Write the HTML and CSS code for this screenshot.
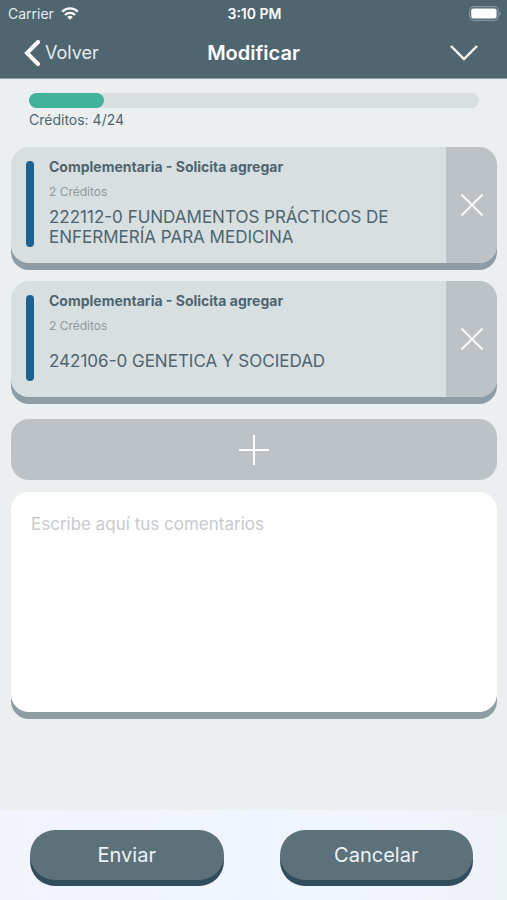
FILE: index.html
```html
<!DOCTYPE html>
<html lang="es">
<head>
  <meta charset="UTF-8">
  <meta name="viewport" content="width=device-width, initial-scale=1.0">
  <title>Modificar</title>
  <link rel="stylesheet" href="styles.css">
</head>
<body>
  <header class="header">
    <div class="status-bar">
      <div class="carrier">
        <span>Carrier</span>
        <svg width="18" height="13" viewBox="0 0 18 13" fill="none" stroke="#fff" stroke-width="2.4">
          <path d="M1.2 4.6a11 11 0 0 1 15.6 0M4 8a7 7 0 0 1 10 0"/>
          <path d="M6.2 10.1a4 4 0 0 1 5.6 0L9 12.8z" fill="#fff" stroke="none"/>
        </svg>
      </div>
      <span class="time">3:10 PM</span>
      <svg class="battery" width="32" height="15" viewBox="0 0 32 15">
        <rect x="0.7" y="0.7" width="28.6" height="13.6" rx="4" fill="none" stroke="#84949d" stroke-width="1.2"/>
        <rect x="2.2" y="2.4" width="25.4" height="10" rx="2.2" fill="#fff"/>
        <path d="M30.4 5.2v4.6c1.8-.8 1.8-3.8 0-4.6z" fill="#84949d"/>
      </svg>
    </div>
    <nav class="nav-bar">
      <button class="back" type="button">
        <svg width="16" height="26" viewBox="0 0 16 26" fill="none" stroke="#fff" stroke-width="4" stroke-linecap="round">
          <path d="M14 2L3 13l11 11"/>
        </svg>
        <span>Volver</span>
      </button>
      <h1>Modificar</h1>
      <button class="toggle" type="button" aria-label="Desplegar">
        <svg width="28" height="16" viewBox="0 0 28 16" fill="none" stroke="#fff" stroke-width="2.4">
          <path d="M1 1l13 13L27 1"/>
        </svg>
      </button>
    </nav>
  </header>

  <main class="content">
    <div class="credits">
      <div class="progress">
        <div class="progress-fill" style="width: 16.67%"></div>
      </div>
      <p>Créditos: 4/24</p>
    </div>

    <div class="courses">
      <article class="card">
        <div class="card-bar"></div>
        <div class="card-info">
          <h2>Complementaria - Solicita agregar</h2>
          <p class="card-credits">2 Créditos</p>
          <p class="card-name">222112-0 FUNDAMENTOS PRÁCTICOS DE ENFERMERÍA PARA MEDICINA</p>
        </div>
        <button class="card-remove" type="button" aria-label="Quitar">
          <svg width="24" height="24" viewBox="0 0 24 24" stroke="#fff" stroke-width="1.8">
            <path d="M1.5 1.5l21 21M22.5 1.5l-21 21"/>
          </svg>
        </button>
      </article>

      <article class="card">
        <div class="card-bar"></div>
        <div class="card-info">
          <h2>Complementaria - Solicita agregar</h2>
          <p class="card-credits">2 Créditos</p>
          <p class="card-name">242106-0 GENETICA Y SOCIEDAD</p>
        </div>
        <button class="card-remove" type="button" aria-label="Quitar">
          <svg width="24" height="24" viewBox="0 0 24 24" stroke="#fff" stroke-width="1.8">
            <path d="M1.5 1.5l21 21M22.5 1.5l-21 21"/>
          </svg>
        </button>
      </article>
    </div>

    <button class="add" type="button" aria-label="Agregar">
      <svg width="30" height="30" viewBox="0 0 30 30" stroke="#fff" stroke-width="2">
        <path d="M15 0v30M0 15h30"/>
      </svg>
    </button>

    <textarea class="comments" aria-label="Comentarios" placeholder="Escribe aquí tus comentarios"></textarea>
  </main>

  <footer class="footer">
    <button class="btn" type="button">Enviar</button>
    <button class="btn" type="button">Cancelar</button>
  </footer>
</body>
</html>
```

FILE: styles.css
```css
* {
  box-sizing: border-box;
}

body {
  margin: 0;
  min-height: 100vh;
  display: flex;
  flex-direction: column;
  background-color: #ebeff0;
  color: #4e6570;
  font-family: Inter, "Liberation Sans", sans-serif;
}

h1, h2, p {
  margin: 0;
}

button {
  border: none;
  padding: 0;
  font-family: inherit;
  color: inherit;
  background: none;
  cursor: pointer;
}

svg {
  display: block;
}

/* header */
.header {
  background-color: #4f6570;
  color: #fff;
  border-bottom: 1px solid #86a0ad;
}

.status-bar,
.nav-bar {
  display: grid;
  grid-template-columns: 1fr auto 1fr;
  align-items: center;
}

.status-bar {
  height: 27px;
  padding: 0 6px 0 8px;
  font-size: 14px;
}

.carrier {
  display: flex;
  align-items: center;
  gap: 7px;
  color: #e6ebee;
}

.time {
  font-weight: 600;
}

.battery {
  justify-self: end;
}

.nav-bar {
  height: 51px;
  padding: 0 24px;
}

.back {
  justify-self: start;
  display: flex;
  align-items: center;
  gap: 5px;
  font-size: 18px;
  color: #e6ebee;
}

.nav-bar h1 {
  font-size: 20px;
  font-weight: 600;
}

.toggle {
  justify-self: end;
  padding-right: 5px;
}

/* content */
.content {
  flex: 1;
  padding: 14px 10px 24px 11px;
}

.credits {
  padding: 0 18px;
  margin-bottom: 19px;
}

.progress {
  height: 15px;
  border-radius: 8px;
  background-color: #d8dfe0;
}

.progress-fill {
  height: 100%;
  border-radius: 8px;
  background-color: #43b29b;
}

.credits p {
  margin-top: 4px;
  font-size: 14px;
  line-height: 16px;
}

.courses {
  display: grid;
  gap: 18px;
}

.card {
  display: flex;
  min-height: 116px;
  border-radius: 18px;
  background-color: #d8dfe1;
  box-shadow: 0 7px 0 #8e9da5;
}

.card-bar {
  width: 8px;
  margin: 14px 15px 16px;
  border-radius: 4px;
  background-color: #1d6190;
}

.card-info {
  flex: 1;
  display: flex;
  flex-direction: column;
  padding: 12px 24px 10px 0;
}

.card-info h2 {
  font-size: 14px;
  line-height: 16px;
  font-weight: 700;
}

.card-credits {
  margin-top: 9px;
  font-size: 12px;
  line-height: 16px;
  color: #8f9a9f;
}

.card-name {
  margin: auto 0;
  font-size: 17px;
  line-height: 20px;
}

.card-remove {
  width: 51px;
  display: grid;
  place-items: center;
  border-radius: 0 18px 18px 0;
  background-color: #bcc2c6;
}

.add {
  width: 100%;
  height: 61px;
  margin: 22px 0 12px;
  display: grid;
  place-items: center;
  border-radius: 18px;
  background-color: #bcc2c6;
}

.comments {
  display: block;
  width: 100%;
  height: 220px;
  padding: 22px 20px;
  border: none;
  border-radius: 18px;
  outline: none;
  resize: none;
  background-color: #fff;
  box-shadow: 0 7px 0 #8e9da1;
  font-family: inherit;
  font-size: 17px;
  line-height: 20px;
  color: #4e6570;
}

.comments::placeholder {
  color: #c8cacc;
}

/* footer */
.footer {
  display: grid;
  grid-template-columns: 1fr 1fr;
  gap: 56px;
  height: 90px;
  padding: 20px 34px 20px 30px;
  background: linear-gradient(to right, #f3f3fc, #eff5fe 50%, #f1f4fd 80%, #edf2f5);
}

.btn {
  height: 50px;
  border-radius: 25px;
  background-color: #5d717b;
  box-shadow: 0 6px 0 #2f4d5c;
  font-size: 20px;
  color: #edf3f8;
}
```
